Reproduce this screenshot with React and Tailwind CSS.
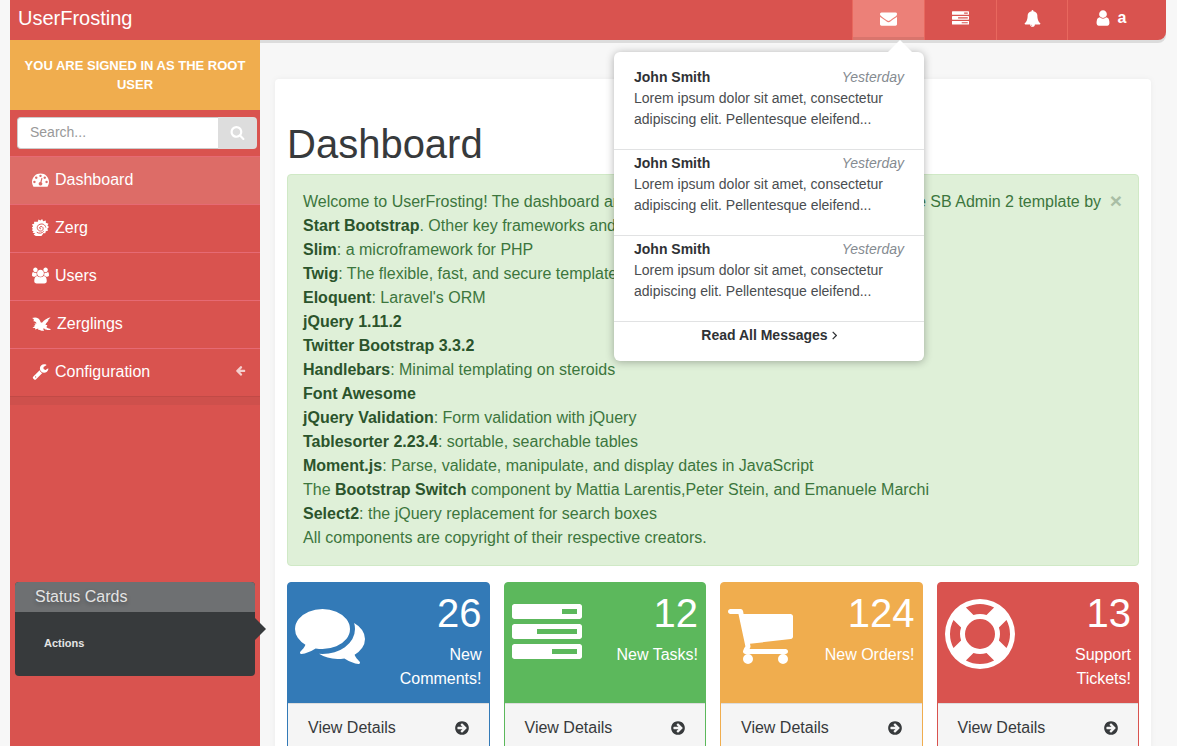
import React from "react";

const glyphs = {
  comments:
    "M1408 768q0 139-94 257t-256.5 186.5-353.5 68.5q-86 0-176-16-124 88-278 128-36 9-86 16h-3q-11 0-20.5-8t-11.5-21q-1-3-1-6.5t.5-6.5 2-6l2.5-5 3.5-5.5 4-5 4.5-5 4-4.5q5-6 23-25t26-29.5 22.5-29 25-38.5 20.5-44q-124-72-195-177t-71-224q0-139 94-257t256.5-186.5 353.5-68.5 353.5 68.5 256.5 186.5 94 257zm384 256q0 120-71 224.5t-195 176.5q10 24 20.5 44t25 38.5 22.5 29 26 29.5 23 25q1 1 4 4.5t4.5 5 4 5 3.5 5.5l2.5 5 2 6 .5 6.5-1 6.5q-3 14-13 22t-22 7q-50-7-86-16-154-40-278-128-90 16-176 16-271 0-472-132 58 4 88 4 161 0 309-45t264-129q125-92 192-212t67-254q0-77-23-152 129 71 204 178t75 230z",
  tasks:
    "M1024 1408h640v-128h-640v128zm-384-512h1024v-128h-1024v128zm640-512h384v-128h-384v128zm512 832v256q0 26-19 45t-45 19h-1664q-26 0-45-19t-19-45v-256q0-26 19-45t45-19h1664q26 0 45 19t19 45zm0-512v256q0 26-19 45t-45 19h-1664q-26 0-45-19t-19-45v-256q0-26 19-45t45-19h1664q26 0 45 19t19 45zm0-512v256q0 26-19 45t-45 19h-1664q-26 0-45-19t-19-45v-256q0-26 19-45t45-19h1664q26 0 45 19t19 45z",
  cart: "M704 1536q0 52-38 90t-90 38-90-38-38-90 38-90 90-38 90 38 38 90zm896 0q0 52-38 90t-90 38-90-38-38-90 38-90 90-38 90 38 38 90zm128-1088v512q0 24-16.5 42.5t-40.5 21.5l-1044 122q13 60 13 70 0 16-24 64h920q26 0 45 19t19 45-19 45-45 19h-1024q-26 0-45-19t-19-45q0-11 8-31.5t16-36 21.5-40 15.5-29.5l-177-823h-204q-26 0-45-19t-19-45 19-45 45-19h256q16 0 28.5 6.5t19.5 15.5 13 24.5 8 26 5.5 29.5 4.5 26h1201q26 0 45 19t19 45z",
  lifeRing:
    "M896 0q182 0 348 71t286 191 191 286 71 348-71 348-191 286-286 191-348 71-348-71-286-191-191-286-71-348 71-348 191-286 286-191 348-71zm0 128q-190 0-361 90l194 194q82-28 167-28t167 28l194-194q-171-90-361-90zm-678 1129l194-194q-28-82-28-167t28-167l-194-194q-90 171-90 361t90 361zm678 407q190 0 361-90l-194-194q-82 28-167 28t-167-28l-194 194q171 90 361 90zm0-384q159 0 271.5-112.5t112.5-271.5-112.5-271.5-271.5-112.5-271.5 112.5-112.5 271.5 112.5 271.5 271.5 112.5zm484-217l194 194q90-171 90-361t-90-361l-194 194q28 82 28 167t-28 167z",
  circleRight:
    "M1413 896q0-27-18-45l-91-91-362-362q-18-18-45-18t-45 18l-91 91q-18 18-18 45t18 45l189 189h-502q-26 0-45 19t-19 45v128q0 26 19 45t45 19h502l-189 189q-18 18-18 45t18 45l91 91q18 18 45 18t45-18l362-362 91-91q18-18 18-45zm251 0q0 209-103 385.5t-279.5 279.5-385.5 103-385.5-103-279.5-279.5-103-385.5 103-385.5 279.5-279.5 385.5-103 385.5 103 279.5 279.5 103 385.5z",
  envelope:
    "M1792 710v794q0 66-47 113t-113 47h-1472q-66 0-113-47t-47-113v-794q44 49 101 87 362 246 497 345 57 42 92.5 65.5t94.5 48 110 24.5h2q51 0 110-24.5t94.5-48 92.5-65.5q170-123 498-345 57-39 100-87zm0-294q0 79-49 151t-122 123q-376 261-468 325-10 7-42.5 31t-54 38.5-52 32.5-57.5 27-50 9h-2q-23 0-50-9t-57.5-27-52-32.5-54-38.5-42.5-31q-91-64-262-182.5t-205-142.5q-62-42-117-115.5t-55-136.5q0-78 41.5-130t118.5-52h1472q65 0 112.5 47t47.5 113z",
  bell: "M912 1696q0-16-16-16-59 0-101.5-42.5t-42.5-101.5q0-16-16-16t-16 16q0 73 51.5 124.5t124.5 51.5q16 0 16-16zm816-288q0 52-38 90t-90 38h-448q0 106-75 181t-181 75-181-75-75-181h-448q-52 0-90-38t-38-90q50-42 91-88t85-119.5 74.5-158.5 50-206 19.5-260q0-152 117-282.5t307-158.5q-8-19-8-39 0-40 28-68t68-28 68 28 28 68q0 20-8 39 190 28 307 158.5t117 282.5q0 139 19.5 260t50 206 74.5 158.5 85 119.5 91 88z",
  user: "M1536 1399q0 109-62.5 187t-150.5 78h-854q-88 0-150.5-78t-62.5-187q0-85 8.5-160.5t31.5-152 58.5-131 94-89 134.5-34.5q131 128 313 128t313-128q76 0 134.5 34.5t94 89 58.5 131 31.5 152 8.5 160.5zm-256-887q0 159-112.5 271.5t-271.5 112.5-271.5-112.5-112.5-271.5 112.5-271.5 271.5-112.5 271.5 112.5 112.5 271.5z",
  search:
    "M1216 832q0-185-131.5-316.5t-316.5-131.5-316.5 131.5-131.5 316.5 131.5 316.5 316.5 131.5 316.5-131.5 131.5-316.5zm512 832q0 52-38 90t-90 38q-54 0-90-38l-343-342q-179 124-399 124-143 0-273.5-55.5t-225-150-150-225-55.5-273.5 55.5-273.5 150-225 225-150 273.5-55.5 273.5 55.5 225 150 150 225 55.5 273.5q0 220-124 399l343 343q37 37 37 90z",
  gauge:
    "M384 1152q0-53-37.5-90.5t-90.5-37.5-90.5 37.5-37.5 90.5 37.5 90.5 90.5 37.5 90.5-37.5 37.5-90.5zm192-448q0-53-37.5-90.5t-90.5-37.5-90.5 37.5-37.5 90.5 37.5 90.5 90.5 37.5 90.5-37.5 37.5-90.5zm428 481l101-382q6-26-7.5-48.5t-38.5-29.5-48 6.5-30 39.5l-101 382q-60 5-107 43.5t-63 98.5q-20 77 20 146t117 89 146-20 89-117q16-60-6-117t-72-91zm660-33q0-53-37.5-90.5t-90.5-37.5-90.5 37.5-37.5 90.5 37.5 90.5 90.5 37.5 90.5-37.5 37.5-90.5zm-640-640q0-53-37.5-90.5t-90.5-37.5-90.5 37.5-37.5 90.5 37.5 90.5 90.5 37.5 90.5-37.5 37.5-90.5zm448 192q0-53-37.5-90.5t-90.5-37.5-90.5 37.5-37.5 90.5 37.5 90.5 90.5 37.5 90.5-37.5 37.5-90.5zm320 448q0 261-141 483-19 29-54 29h-1402q-35 0-54-29-141-221-141-483 0-182 71-348t191-286 286-191 348-71 348 71 286 191 191 286 71 348z",
  users:
    "M593 896q-162 5-265 128h-134q-82 0-138-40.5t-56-118.5q0-353 124-353 6 0 43.5 21t97.5 42.5 119 21.5q67 0 133-23-5 37-5 66 0 139 81 256zm1071 637q0 120-73 189.5t-194 69.5h-874q-121 0-194-69.5t-73-189.5q0-53 3.5-103.5t14-109 26.5-108.5 43-97.5 62-81 85.5-53.5 111.5-20q10 0 43 21.5t73 48 107 48 135 21.5 135-21.5 107-48 73-48 43-21.5q61 0 111.5 20t85.5 53.5 62 81 43 97.5 26.5 108.5 14 109 3.5 103.5zm-1024-1277q0 106-75 181t-181 75-181-75-75-181 75-181 181-75 181 75 75 181zm704 384q0 159-112.5 271.5t-271.5 112.5-271.5-112.5-112.5-271.5 112.5-271.5 271.5-112.5 271.5 112.5 112.5 271.5zm576 225q0 78-56 118.5t-138 40.5h-134q-103-123-265-128 81-117 81-256 0-29-5-66 66 23 133 23 59 0 119-21.5t97.5-42.5 43.5-21q124 0 124 353zm-128-609q0 106-75 181t-181 75-181-75-75-181 75-181 181-75 181 75 75 181z",
  wrench:
    "M448 1472q0-26-19-45t-45-19-45 19-19 45 19 45 45 19 45-19 19-45zm644-420l-682 682q-37 37-90 37-52 0-91-37l-106-108q-38-36-38-90 0-53 38-91l681-681q39 98 114.5 173.5t173.5 114.5zm634-435q0 39-23 106-47 134-164.5 217.5t-258.5 83.5q-185 0-316.5-131.5t-131.5-316.5 131.5-316.5 316.5-131.5q58 0 121.5 16.5t107.5 46.5q16 11 16 28t-16 28l-293 169v224l193 107q5-3 79-48.5t135.5-81 70.5-35.5q15 0 23.5 10t8.5 25z",
  arrowLeft:
    "M1664 896v128q0 53-32.5 90.5t-84.5 37.5h-704l293 294q38 36 38 90t-38 90l-75 76q-37 37-90 37-52 0-91-37l-651-652q-37-37-37-90 0-52 37-91l651-650q38-38 91-38 52 0 90 38l75 74q38 38 38 91t-38 91l-293 293h704q52 0 84.5 37.5t32.5 90.5z",
};

function Glyph({ name, className, viewBox = "0 0 1792 1792" }) {
  return (
    <svg viewBox={viewBox} fill="currentColor" aria-hidden="true" className={className}>
      <path d={glyphs[name]} />
    </svg>
  );
}

function SpikedShell() {
  return (
    <svg viewBox="0 0 32 32" aria-hidden="true" className="size-[17px] shrink-0">
      <path
        fill="currentColor"
        d="M11 5 12 1l4 2 3-3 2 4 5-1v4l5 2-2 3 3 3-3 3 1 4-4 1-1 4-4 0c-1 4-5 7-9 6-4 0-7-2-9-4l3-2-5-1 2-3-4-2 3-2-3-3 3-2-2-4 4-1V5z"
      />
      <path
        fill="none"
        stroke="#d9534f"
        strokeWidth="1.8"
        d="M17 18c-2 1-4-1-2-3 3-2 6 0 6 3 0 5-6 6-9 3-4-4-2-10 3-11 5-2 10 1 11 6M9 25c5 3 10 2 13-2"
      />
    </svg>
  );
}

function WingedBeast() {
  return (
    <svg viewBox="0 0 42 30" aria-hidden="true" className="h-[14px] w-[19px] shrink-0">
      <path
        fill="currentColor"
        d="M0 2c5-2 10-2 14 1 3 2 4 5 5 8l3 1c5-6 12-10 19-12-2 3-5 5-6 7l2 0c-4 4-7 7-7 10l4 0c-1 3-2 4-2 5 3 3 7 2 10 5-3 2-8 2-11 0l-2 0-3-3-1 3 2 3h-6l-4-2-4-1 1-2-7 2 0-3-6 0 6-5-4-1 5-1-3-3 5 0c-1-4-4-6-7-5C6 5 3 4 0 2z"
      />
    </svg>
  );
}

const menu = [
  { label: "Dashboard", icon: <Glyph name="gauge" className="size-[17px] shrink-0" />, active: true },
  { label: "Zerg", icon: <SpikedShell /> },
  {
    label: "Users",
    icon: <Glyph name="users" viewBox="0 0 1920 1792" className="size-[17px] shrink-0" />,
  },
  { label: "Zerglings", icon: <WingedBeast /> },
  {
    label: "Configuration",
    icon: <Glyph name="wrench" className="size-[17px] shrink-0" />,
    expandable: true,
  },
];

const credits = [
  ["Slim", ": a microframework for PHP"],
  ["Twig", ": The flexible, fast, and secure template engine"],
  ["Eloquent", ": Laravel's ORM"],
  ["jQuery 1.11.2", ""],
  ["Twitter Bootstrap 3.3.2", ""],
  ["Handlebars", ": Minimal templating on steroids"],
  ["Font Awesome", ""],
  ["jQuery Validation", ": Form validation with jQuery"],
  ["Tablesorter 2.23.4", ": sortable, searchable tables"],
  ["Moment.js", ": Parse, validate, manipulate, and display dates in JavaScript"],
];

const cards = [
  { icon: "comments", count: 26, label: "New Comments!", tone: "border-[#337ab7] bg-[#337ab7]" },
  { icon: "tasks", count: 12, label: "New Tasks!", tone: "border-[#5cb85c] bg-[#5cb85c]" },
  {
    icon: "cart",
    viewBox: "64 0 1792 1792",
    count: 124,
    label: "New Orders!",
    tone: "border-[#f0ad4e] bg-[#f0ad4e]",
  },
  { icon: "lifeRing", count: 13, label: "Support Tickets!", tone: "border-[#d9534f] bg-[#d9534f]" },
];

function MessagesMenu() {
  return (
    <div className="absolute top-[52px] right-0 z-20 w-[310px] rounded-md bg-white text-sm leading-[21px] text-[#4a4d50] shadow-[0_1px_8px_rgba(0,0,0,0.3)]">
      <svg viewBox="0 0 24 12" aria-hidden="true" className="absolute -top-3 right-3 h-3 w-6">
        <path d="M0 12 12 0l12 12z" fill="#fff" />
      </svg>
      <ul>
        {[0, 1, 2].map((n) => (
          <li key={n} className="border-b border-[#e1e2e3] pt-[3px] first:pt-[15px]">
            <a href="#message" className="block px-5 pb-[19px]">
              <span className="flex justify-between">
                <strong className="text-[#2f3235]">John Smith</strong>
                <em className="text-[#858b91]">Yesterday</em>
              </span>
              <span className="block">
                Lorem ipsum dolor sit amet, consectetur adipiscing elit. Pellentesque eleifend...
              </span>
            </a>
          </li>
        ))}
      </ul>
      <a
        href="#messages"
        className="flex items-center justify-center gap-1 pt-[3px] pb-[15px] font-bold text-[#2f3235]"
      >
        Read All Messages
        <svg viewBox="0 0 5 9" fill="none" stroke="currentColor" aria-hidden="true" className="h-[9px] w-[5px]">
          <path d="M.7.8 4.3 4.5.7 8.2" strokeWidth="1.2" />
        </svg>
      </a>
    </div>
  );
}

function Header() {
  const cell = "flex h-10 items-center justify-center border-l border-[#e8685e] pb-1";
  return (
    <header className="relative flex h-10 items-start justify-between rounded-br-lg bg-[#d9534f] text-white shadow-[0_3px_0_#dcdcdc]">
      <a href="#home" className="px-2 text-xl leading-9">
        UserFrosting
      </a>
      <nav className="flex">
        <div className="relative">
          <button
            type="button"
            aria-label="Messages"
            className={`${cell} w-18 bg-[#ec8078] shadow-[inset_0_-3px_0_#d9756d]`}
          >
            <Glyph name="envelope" className="size-[17px]" />
          </button>
          <MessagesMenu />
        </div>
        <button type="button" aria-label="Tasks" className={`${cell} w-18`}>
          <Glyph name="tasks" className="size-[17px]" />
        </button>
        <button type="button" aria-label="Alerts" className={`${cell} w-[71px]`}>
          <Glyph name="bell" className="size-[17px]" />
        </button>
        <button type="button" className={`${cell} w-[99px] gap-1.5 pr-3.5`}>
          <Glyph name="user" className="size-[18px]" />
          <span className="font-bold">a</span>
        </button>
      </nav>
    </header>
  );
}

function Sidebar() {
  return (
    <aside className="relative z-10 w-[250px] shrink-0 bg-[#d9534f] text-white">
      <p className="bg-[#f0ad4e] px-3 py-4 text-center text-[13px] leading-[19px] font-bold">
        YOU ARE SIGNED IN AS THE ROOT USER
      </p>
      <form className="flex py-[7px] pr-[3px] pl-[7px]">
        <input
          type="text"
          aria-label="Search"
          placeholder="Search..."
          className="h-8 min-w-0 flex-1 rounded-l border border-r-0 border-[#ccc] bg-white px-3 pb-0.5 text-sm text-[#555] placeholder:text-[#999]"
        />
        <button
          type="button"
          aria-label="Search"
          className="flex h-8 w-[39px] items-center justify-center rounded-r bg-[#ddd] pb-0.5"
        >
          <Glyph name="search" className="size-[15px]" />
        </button>
      </form>
      <nav>
        <ul className="border-b border-[#c14a46]">
          {menu.map((item) => (
            <li key={item.label} className="border-t border-[#e66a74]">
              <a
                href={`#${item.label.toLowerCase()}`}
                className={`flex h-[47px] items-center pr-[14px] pb-0.5 pl-[22px] ${item.active ? "bg-[#dd6c67]" : ""}`}
              >
                <span className="mr-1.5 flex">{item.icon}</span>
                {item.label}
                {item.expandable && (
                  <Glyph name="arrowLeft" className="mb-0.5 ml-auto size-[11px] text-[#f4cfce]" />
                )}
              </a>
            </li>
          ))}
        </ul>
        <div className="h-2 bg-[#ce504c]" />
      </nav>
      <section className="absolute top-[542px] right-[5px] left-[5px] rounded bg-[#373a3c] text-[#e4e4e4]">
        <h2 className="rounded-t bg-[#6e7072] px-5 leading-[30px] [text-shadow:0_2px_4px_rgba(0,0,0,0.3)]">
          Status Cards
        </h2>
        <a href="#actions" className="block px-[29px] pb-0.5 text-[11px] leading-[62px] font-bold">
          Actions
        </a>
        <svg viewBox="0 0 11 22" aria-hidden="true" className="absolute top-9 -right-[11px] h-[22px] w-[11px]">
          <path d="M0 0 11 11 0 22z" fill="#373a3c" />
        </svg>
      </section>
    </aside>
  );
}

function StatusCard({ icon, viewBox, count, label, tone }) {
  return (
    <article className={`overflow-hidden rounded border ${tone}`}>
      <div className="flex h-[120px] justify-between px-[7px] pt-[5px] text-white">
        <Glyph name={icon} viewBox={viewBox} className="mt-[11px] size-[70px] shrink-0" />
        <div className="pl-6 text-right">
          <div className="text-[40px] leading-[50px]">{count}</div>
          <div className="mt-[5px]">{label}</div>
        </div>
      </div>
      <a
        href="#details"
        className="flex items-center justify-between border-t border-[#ddd] bg-[#f5f5f5] py-3 pr-[19px] pl-5 text-[#373a3c]"
      >
        View Details
        <Glyph name="circleRight" className="mb-px size-4" />
      </a>
    </article>
  );
}

export default function App() {
  return (
    <div className="flex min-h-screen flex-col bg-[#f7f7f7] pr-[11px] pl-[10px] font-['Liberation_Sans',Arial,sans-serif] text-base text-[#373a3c]">
      <Header />
      <div className="flex flex-1">
        <Sidebar />
        <main className="mt-[39px] mr-[15px] ml-[15px] min-w-0 flex-1 rounded-t bg-white px-3 pb-3 shadow-[0_0_6px_rgba(0,0,0,0.05)]">
          <h1 className="pt-[43px] pb-2 text-[40px] leading-[44px]">Dashboard</h1>
          <div className="relative rounded border border-[#d0e9c6] bg-[#dff0d8] p-[15px] pr-[35px] text-[#3c763d]">
            <button
              type="button"
              aria-label="Close"
              className="absolute top-3.5 right-4 text-[21px] leading-6 font-bold text-[#a9bea5]"
            >
              ×
            </button>
            <p>
              Welcome to UserFrosting! The dashboard and admin account features are based on the SB Admin 2 template by
            </p>
            <p>
              <a href="#bootstrap" className="font-bold text-[#2b542c]">
                Start Bootstrap
              </a>
              . Other key frameworks and plugins include:
            </p>
            <ul>
              {credits.map(([name, note]) => (
                <li key={name}>
                  <a href="#credit" className="font-bold text-[#2b542c]">
                    {name}
                  </a>
                  {note}
                </li>
              ))}
            </ul>
            <p>
              The{" "}
              <a href="#switch" className="font-bold text-[#2b542c]">
                Bootstrap Switch
              </a>{" "}
              component by Mattia Larentis,Peter Stein, and Emanuele Marchi
            </p>
            <p>
              <a href="#select2" className="font-bold text-[#2b542c]">
                Select2
              </a>
              : the jQuery replacement for search boxes
            </p>
            <p>All components are copyright of their respective creators.</p>
          </div>
          <div className="mt-4 grid grid-cols-4 gap-3.5">
            {cards.map((card) => (
              <StatusCard key={card.icon} {...card} />
            ))}
          </div>
        </main>
      </div>
    </div>
  );
}
